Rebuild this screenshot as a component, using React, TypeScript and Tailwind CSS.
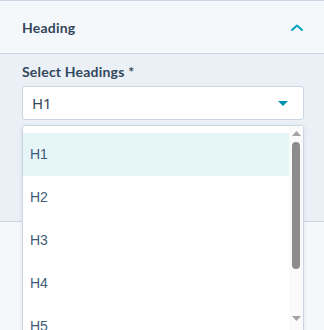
import React from "react";

export default function App() {
  const options = ["H1", "H2", "H3", "H4", "H5", "H6"];
  return (
    <div className="relative w-[324px] h-[330px] overflow-hidden bg-[#f5f8fa] text-[#33475b]" style={{ fontFamily: '"Lato", "Noto Sans", sans-serif' }}>
      <div className="border-t border-[#cbd6e2] bg-[#f5f8fa] h-[54px] flex items-center justify-between pl-[22px] pr-[20px] border-b border-b-[#cbd6e2]">
        <span className="text-[14px] font-bold tracking-[0.2px]">Heading</span>
        <svg width="14" height="10" viewBox="0 0 14 10" className="mt-[1px]">
          <path d="M2 7 L7 2.5 L12 7" fill="none" stroke="#00a4bd" strokeWidth="2" strokeLinecap="round" strokeLinejoin="round" />
        </svg>
      </div>
      <div className="bg-[#eaf0f6] h-[168px] border-b border-[#cbd6e2] px-[22px] pt-[8px]">
        <div className="text-[14px] font-bold tracking-[0.2px] leading-[20px]">Select Headings *</div>
        <div className="mt-[4px] h-[34px] bg-white border border-[#cbd6e2] rounded-[3px] flex items-center justify-between pl-[9px] pr-[14px] w-[282px]">
          <span className="text-[15px]" style={{ fontFamily: '"Noto Sans", sans-serif' }}>H1</span>
          <svg width="12" height="7" viewBox="0 0 12 7">
            <path d="M1 1 L11 1 L6 6 Z" fill="#0091ae" />
          </svg>
        </div>
      </div>
      <div className="absolute left-[22px] top-[125px] w-[282px] h-[215px] bg-white border border-[#cbd6e2] rounded-t-[3px] shadow-[0_1px_4px_rgba(45,62,80,0.12)] flex">
        <div className="flex-1 pt-[7px]">
          {options.map((o, i) => (
            <div
              key={o}
              className={`h-[43px] flex items-center pl-[7px] text-[14px] text-[#425b76] ${i === 0 ? "bg-[#e5f5f8]" : ""}`}
              style={{ fontFamily: '"Liberation Sans", Arial, sans-serif' }}
            >
              {o}
            </div>
          ))}
        </div>
        <div className="w-[14px] bg-[#fafafa] flex flex-col items-center pt-[5px]">
          <svg width="9" height="5" viewBox="0 0 9 5">
            <path d="M0 5 L4.5 0 L9 5 Z" fill="#a3a3a3" />
          </svg>
          <div className="mt-[6px] w-[8px] h-[127px] rounded-[4px] bg-[#8c8c8c]" />
          <div className="h-[47px]" />
          <svg width="9" height="5" viewBox="0 0 9 5">
            <path d="M0 0 L9 0 L4.5 5 Z" fill="#a3a3a3" />
          </svg>
        </div>
      </div>
    </div>
  );
}
